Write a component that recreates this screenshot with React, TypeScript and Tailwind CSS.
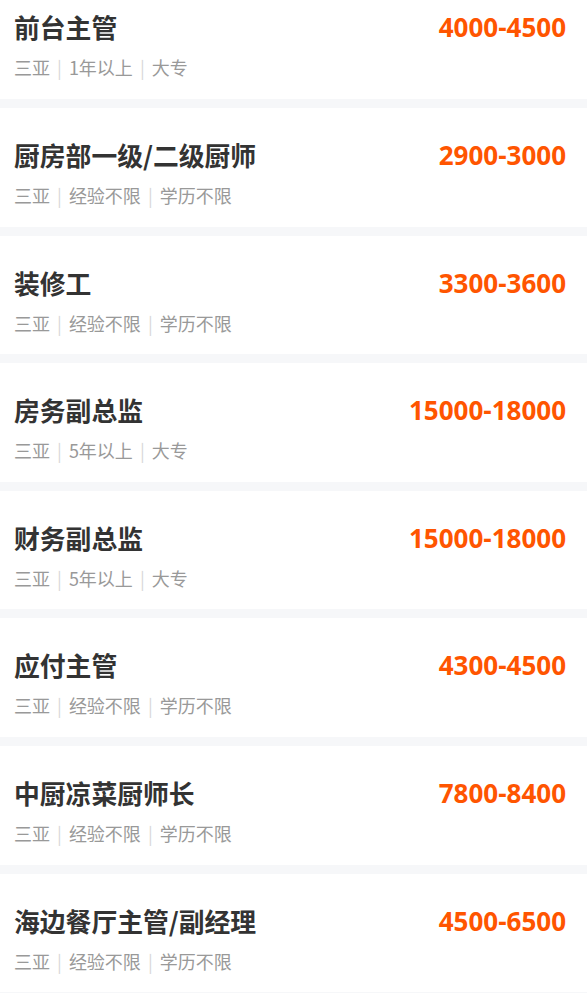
import React from 'react';

interface Job {
  title: string;
  salary: string;
  city: string;
  exp: string;
  edu: string;
}

const jobs: Job[] = [
  { title: '前台主管', salary: '4000-4500', city: '三亚', exp: '1年以上', edu: '大专' },
  { title: '厨房部一级/二级厨师', salary: '2900-3000', city: '三亚', exp: '经验不限', edu: '学历不限' },
  { title: '装修工', salary: '3300-3600', city: '三亚', exp: '经验不限', edu: '学历不限' },
  { title: '房务副总监', salary: '15000-18000', city: '三亚', exp: '5年以上', edu: '大专' },
  { title: '财务副总监', salary: '15000-18000', city: '三亚', exp: '5年以上', edu: '大专' },
  { title: '应付主管', salary: '4300-4500', city: '三亚', exp: '经验不限', edu: '学历不限' },
  { title: '中厨凉菜厨师长', salary: '7800-8400', city: '三亚', exp: '经验不限', edu: '学历不限' },
  { title: '海边餐厅主管/副经理', salary: '4500-6500', city: '三亚', exp: '经验不限', edu: '学历不限' },
];

function Divider() {
  return <span className="mx-[7px] text-[#d9d9d9]">|</span>;
}

function JobCard({ job }: { job: Job }) {
  return (
    <div className="bg-white pl-[14px] pr-[21px] pt-[29px] pb-[18.6px]">
      <div className="flex items-center justify-between h-[36px]">
        <span className="text-[25.8px] font-bold text-[#333333] leading-[36px] font-['Noto_Sans_CJK_SC',sans-serif]">
          {job.title}
        </span>
        <span className="text-[26px] font-bold text-[#ff5500] leading-[36px] font-['Open_Sans',sans-serif]">
          {job.salary}
        </span>
      </div>
      <div className="mt-[9px] h-[26px] flex items-center text-[18px] leading-[26px] text-[#999999] font-['Noto_Sans_CJK_SC',sans-serif]">
        <span>{job.city}</span>
        <Divider />
        <span>{job.exp}</span>
        <Divider />
        <span>{job.edu}</span>
      </div>
    </div>
  );
}

export default function App() {
  return (
    <div className="w-[587px] h-[993px] overflow-hidden bg-[#f6f7f9]">
      <div className="-mt-[19.6px] flex flex-col gap-[9px]">
        {jobs.map(job => (
          <JobCard key={job.title} job={job} />
        ))}
      </div>
    </div>
  );
}
